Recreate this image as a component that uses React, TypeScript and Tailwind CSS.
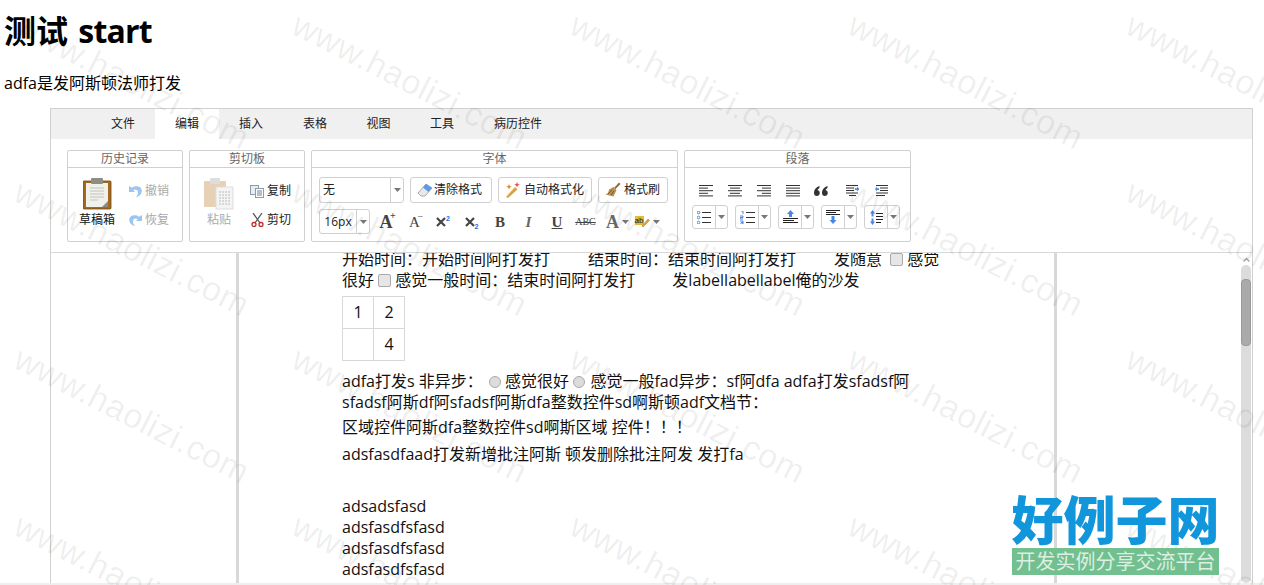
import React from "react";

const FONT = "[font-family:'Open_Sans','Noto_Sans_CJK_SC',sans-serif]";

// watermark grid, one www.haolizi.com per cell
const marks: { x: number; y: number }[] = [];
for (let row = 0; row < 4; row++) {
  for (let col = 0; col < 5; col++) {
    marks.push({ x: 25 + col * 278, y: 6 + row * 167 });
  }
}

const Caret = () => (
  <svg width="7" height="4" viewBox="0 0 7 4" className="shrink-0">
    <path d="M0 0h7L3.500 4z" fill="#777" />
  </svg>
);

const Group = ({ title, width, children }: { title: string; width: string; children: React.ReactNode }) => (
  <div className={`${width} h-[92px] border border-[#d0d0d0] rounded-[2px] flex flex-col`}>
    <div className="h-[17px] border-b border-[#d0d0d0] text-center text-[12px] leading-[16px] text-[#666]">{title}</div>
    <div className="flex-1 relative">{children}</div>
  </div>
);

const SmallBtn = ({ icon, label, muted }: { icon: React.ReactNode; label: string; muted?: boolean }) => (
  <div className={`flex items-center gap-[3px] text-[12px] leading-[16px] ${muted ? "text-[#aaa]" : "text-[#222]"}`}>
    <span className="w-[14px] h-[14px] flex items-center justify-center">{icon}</span>
    {label}
  </div>
);

const FmtBtn = ({ w, gap, icon, label }: { w: string; gap: string; icon: React.ReactNode; label: string }) => (
  <div className={`${w} ${gap} h-[26px] pl-[6px] border border-[#d0d0d0] rounded-[3px] flex items-center text-[12px] text-[#222]`}>
    {icon}
    <span>{label}</span>
  </div>
);

const SplitBtn = ({ children }: { children: React.ReactNode }) => (
  <div className="h-[24px] w-[36px] border border-[#d0d0d0] rounded-[3px] flex items-center">
    <div className="w-[23px] h-full border-r border-[#d0d0d0] flex items-center justify-center">{children}</div>
    <div className="flex-1 flex justify-center"><Caret /></div>
  </div>
);

const BLUE = "#4a86e8";

const Align = ({ rows }: { rows: [number, number][] }) => (
  <svg width="15" height="12" viewBox="0 0 15 12" className="shrink-0">
    {rows.map(([x, w], i) => (
      <rect key={i} x={x} y={i * 2.600} width={w} height="1" fill="#333" />
    ))}
  </svg>
);

const IconQuote = () => (
  <svg width="15" height="10" viewBox="0 0 15 10" className="shrink-0">
    <path d="M3 10a3 3 0 0 1-3-3C0 3.500 2.500 1 5.500 0v2C4.500 2.600 3.800 3.300 3.600 4.100A3 3 0 0 1 3 10zM11 10a3 3 0 0 1-3-3c0-3.500 2.500-6 5.500-7v2c-1 .6-1.700 1.300-1.900 2.100A3 3 0 0 1 11 10z" fill="#333" />
  </svg>
);

const IconIndent = () => (
  <svg width="13" height="12" viewBox="0 0 13 12" className="shrink-0">
    <path d="M0 .5h12M0 3h8M0 5.500h8M0 8h12M3 10.500h7" stroke="#333" />
    <path d="M9 3.200h2V1.500L13.500 4 11 6.500V5H9z" fill={BLUE} />
  </svg>
);

const IconOutdent = () => (
  <svg width="13" height="12" viewBox="0 0 13 12" className="shrink-0">
    <path d="M1 .5h12M5 3h8M5 5.500h8M1 8h12M1 10.500h9" stroke="#333" />
    <path d="M4 3.200H2V1.500L0 4l2 2.500V5h2z" fill={BLUE} />
  </svg>
);

const IconBullets = () => (
  <svg width="15" height="13" viewBox="0 0 15 13">
    <path d="M5 1.500h9M5 6.500h9M5 11.500h9" stroke="#333" />
    <circle cx="1.500" cy="1.500" r="1.300" fill="none" stroke={BLUE} />
    <circle cx="1.500" cy="6.500" r="1.300" fill="none" stroke={BLUE} />
    <circle cx="1.500" cy="11.500" r="1.300" fill="none" stroke={BLUE} />
  </svg>
);

const IconNumbers = () => (
  <svg width="15" height="13" viewBox="0 0 15 13">
    <path d="M6 1.500h9M6 6.500h9M6 11.500h9" stroke="#333" />
    <path d="M1 0h2v3M0 5h3v1.500H0V8h3M0 10h3v3H0M1 11.500h2" fill="none" stroke={BLUE} />
  </svg>
);

const IconSpaceBefore = () => (
  <svg width="15" height="14" viewBox="0 0 15 14">
    <path d="M7.500 0L11 4H9v3H6V4H4z" fill={BLUE} />
    <path d="M0 8.500h15M0 10.500h11M0 12.500h15" stroke="#222" />
  </svg>
);

const IconSpaceAfter = () => (
  <svg width="15" height="14" viewBox="0 0 15 14">
    <path d="M0 .5h14M0 2.500h10M0 4.500h14" stroke="#222" />
    <path d="M7 14l-3.500-4h2V6h3v4h2z" fill={BLUE} />
  </svg>
);

const IconLineHeight = () => (
  <svg width="13" height="15" viewBox="0 0 13 15">
    <path d="M2.500 0L5 3.500H3.500v3h-2v-3H0zM2.500 15L5 11.500H3.500v-3h-2v3H0z" fill={BLUE} />
    <path d="M6 3.500h7M6 6.500h7M6 9.500h7M6 12.500h5" stroke="#222" />
  </svg>
);

const IconX = ({ sub }: { sub?: boolean }) => (
  <span className="relative w-[14px] h-[16px] flex items-center">
    <svg width="10" height="10" viewBox="0 0 10 10">
      <path d="M1 1l8 8M9 1l-8 8" stroke="#444" strokeWidth="2.200" />
    </svg>
    <span className={`absolute left-[10px] text-[7px] leading-[8px] font-bold text-[#2b6fe0] [font-family:'Liberation_Sans',sans-serif] ${sub ? "top-[9px]" : "top-[1px]"}`}>2</span>
  </span>
);

const Ribbon = () => (
  <div className="h-[114px] pl-[16px] pt-[11px] flex gap-[6px] border-b border-[#d8d8d8] bg-white">
    <Group title="历史记录" width="w-[116px]">
      <div className="absolute left-[10px] top-[10px] w-[38px] flex flex-col items-center">
        <svg width="29" height="32" viewBox="0 0 29 32">
          <rect x="0" y="3" width="28" height="28" rx="1" fill="#a5691e" />
          <rect x="0" y="3" width="28" height="28" rx="1" fill="none" stroke="#6e4a1c" strokeWidth=".8" />
          <rect x="3" y="5" width="22" height="24" fill="#f1f1ec" />
          <path d="M7 10h14M7 13h14M7 16h14M7 19h14M7 22h8" stroke="#c4c4bc" />
          <path d="M25 23v6h-6z" fill="#8a8a8a" />
          <rect x="8" y="0" width="12" height="6" rx="1" fill="#8d8d83" />
        </svg>
        <span className="text-[12px] leading-[16px] mt-[2px] text-[#111]">草稿箱</span>
      </div>
      <div className="absolute left-[60px] top-[15px] flex flex-col gap-[13px]">
        <SmallBtn
          muted
          label="撤销"
          icon={
            <svg width="13" height="13" viewBox="0 0 13 13">
              <path d="M0 1v6h6L4.300 5.200C6 4 8.600 4.500 9 7c.2 2-.5 3.500-2 5 3.500-.6 6-3.500 5.800-6.500C12.500 1.500 7 0 3 2.800z" fill="#9cc6ef" />
            </svg>
          }
        />
        <SmallBtn
          muted
          label="恢复"
          icon={
            <svg width="13" height="13" viewBox="0 0 13 13">
              <path d="M13 1v6H7l1.700-1.800C7 4 4.400 4.500 4 7c-.2 2 .5 3.500 2 5C2.500 11.400 0 8.500.2 5.500.5 1.500 6 0 10 2.800z" fill="#9cc6ef" />
            </svg>
          }
        />
      </div>
    </Group>
    <Group title="剪切板" width="w-[116px]">
      <div className="absolute left-[13px] top-[10px] w-[32px] flex flex-col items-center">
        <svg width="32" height="32" viewBox="0 0 32 32">
          <rect x="1" y="3" width="22" height="26" rx="1" fill="#e6d0b6" />
          <rect x="7" y="0" width="10" height="6" rx="1" fill="#ddd" />
          <rect x="13" y="9" width="17" height="22" fill="#f4f4f4" stroke="#ddd" />
          <path d="M16 14h11M16 17h11M16 20h11M16 23h11M16 26h11" stroke="#bbb" strokeDasharray="2 1" />
        </svg>
        <span className="text-[12px] leading-[16px] mt-[2px] text-[#aaa]">粘贴</span>
      </div>
      <div className="absolute left-[60px] top-[15px] flex flex-col gap-[13px]">
        <SmallBtn
          label="复制"
          icon={
            <svg width="14" height="13" viewBox="0 0 14 13">
              <rect x=".5" y=".5" width="8" height="9" fill="#e8edf4" stroke="#8c9cb0" />
              <rect x="5.500" y="3.500" width="8" height="9" fill="#fff" stroke="#8c9cb0" />
              <path d="M7 6h5M7 8h5M7 10h5" stroke="#6d7f96" />
            </svg>
          }
        />
        <SmallBtn
          label="剪切"
          icon={
            <svg width="13" height="14" viewBox="0 0 13 14">
              <path d="M2 0l7 10M11 0L4 10" stroke="#555" strokeWidth="1.300" />
              <circle cx="3" cy="11.500" r="2" fill="none" stroke="#c62828" strokeWidth="1.300" />
              <circle cx="10" cy="11.500" r="2" fill="none" stroke="#c62828" strokeWidth="1.300" />
            </svg>
          }
        />
      </div>
    </Group>
    <Group title="字体" width="w-[367px]">
      <div className="pt-[9px] pl-[7px] flex flex-col gap-[6px]">
        <div className="flex gap-[6px] items-center">
          <div className="w-[85px] h-[26px] border border-[#d0d0d0] rounded-[3px] flex items-center">
            <span className="flex-1 pl-[3px] text-[12px] text-[#222]">无</span>
            <div className="w-[13px] h-full border-l border-[#d0d0d0] flex items-center justify-center"><Caret /></div>
          </div>
          <FmtBtn
            w="w-[82px]"
            gap="gap-[1px]"
            label="清除格式"
            icon={
              <svg width="16" height="16" viewBox="0 0 16 16">
                <path d="M1 11L9 2l6 4-7 8H4z" fill="#e8e8e8" stroke="#aaa" />
                <path d="M6 5.500L9 2l6 4-3.500 4z" fill="#5b9be6" />
              </svg>
            }
          />
          <FmtBtn
            w="w-[94px]"
            gap="gap-[3px]"
            label="自动格式化"
            icon={
              <svg width="16" height="16" viewBox="0 0 16 16">
                <path d="M1 15l9-10 2.500 2.500L3 16z" fill="#d9a441" />
                <path d="M12 0l.8 2 2 .8-2 .8-.8 2-.8-2-2-.8 2-.8z" fill="#e74c3c" />
                <path d="M4 2l.8 2 2 .8-2 .8L4 7.600l-.8-2-2-.8 2-.8z" fill="#e67e22" />
              </svg>
            }
          />
          <FmtBtn
            w="w-[70px]"
            gap="gap-[3px]"
            label="格式刷"
            icon={
              <svg width="16" height="16" viewBox="0 0 16 16">
                <path d="M9 6l5-5.500 1.500 1.500-5 5z" fill="#8d6b3a" />
                <path d="M8.500 5l3 3-3 6.500-8-2c3-1 3-3 3.500-5z" fill="#b98f55" />
                <path d="M3 12l4-4M6 13l3-4" stroke="#7d5c2c" />
              </svg>
            }
          />
        </div>
        <div className="flex items-center">
          <div className="w-[51px] h-[25px] border border-[#d0d0d0] rounded-[3px] flex items-center">
            <span className="w-[37px] text-center text-[12px] text-[#222] border-r border-[#d0d0d0] leading-[23px]">16px</span>
            <div className="flex-1 flex justify-center"><Caret /></div>
          </div>
          <div className="ml-[9px] flex items-center gap-[14.500px] [font-family:'Liberation_Serif',serif] text-[#444]">
            <span className="relative w-[14px] text-center text-[18px] leading-[20px] font-bold">A<span className="absolute left-[11px] -top-[1px] text-[10px] leading-[10px]">+</span></span>
            <span className="relative w-[14px] text-center text-[15px] leading-[20px]">A<span className="absolute left-[10px] top-[0px] text-[10px] leading-[10px]">−</span></span>
            <IconX />
            <IconX sub />
            <span className="w-[14px] text-center text-[15px] leading-[20px] font-bold">B</span>
            <span className="w-[14px] text-center text-[15px] leading-[20px] italic font-bold text-[#666]">I</span>
            <span className="w-[14px] text-center text-[15px] leading-[20px] underline font-bold">U</span>
            <span className="w-[14px] flex justify-center text-[10px] leading-[20px] line-through">ABC</span>
            <span className="-ml-[1px] flex items-center gap-[3px] w-[21px] text-[18px] leading-[20px] font-bold text-[#666]">A<Caret /></span>
            <span className="-ml-[7px] flex items-center gap-[3px]">
              <span className="relative w-[15px] h-[12px]">
                <span className="absolute left-0 top-0 w-[9px] h-[9px] text-center text-[8px] leading-[9px] bg-[#e8b93a] text-[#222] [font-family:'Liberation_Sans',sans-serif]">ab</span>
                <svg width="15" height="12" viewBox="0 0 15 12" className="absolute left-0 top-0">
                  <path d="M7 10l6-7 1.500 1.500L8 11z" fill="#d9a441" stroke="#a87a2a" strokeWidth=".5" />
                </svg>
              </span>
              <Caret />
            </span>
          </div>
        </div>
      </div>
    </Group>
    <Group title="段落" width="w-[227px]">
      <div className="pt-[16px] pl-[7px] flex flex-col gap-[7px]">
        <div className="h-[14px] pl-[7px] flex items-center">
          <Align rows={[[0, 14], [0, 9], [0, 14], [0, 9], [0, 14]]} />
          <span className="w-[14px]" />
          <Align rows={[[0, 14], [2, 10], [0, 14], [2, 10], [0, 14]]} />
          <span className="w-[14px]" />
          <Align rows={[[0, 14], [5, 9], [0, 14], [5, 9], [0, 14]]} />
          <span className="w-[14px]" />
          <Align rows={[[0, 14], [0, 14], [0, 14], [0, 14], [0, 14]]} />
          <span className="w-[13px]" />
          <IconQuote />
          <span className="w-[17px]" />
          <IconIndent />
          <span className="w-[16px]" />
          <IconOutdent />
        </div>
        <div className="flex gap-[7px]">
          <SplitBtn><IconBullets /></SplitBtn>
          <SplitBtn><IconNumbers /></SplitBtn>
          <SplitBtn><IconSpaceBefore /></SplitBtn>
          <SplitBtn><IconSpaceAfter /></SplitBtn>
          <SplitBtn><IconLineHeight /></SplitBtn>
        </div>
      </div>
    </Group>
  </div>
);

const tabs = [
  { label: "文件", w: "w-[64px]" },
  { label: "编辑", w: "w-[64px]", active: true },
  { label: "插入", w: "w-[64px]" },
  { label: "表格", w: "w-[64px]" },
  { label: "视图", w: "w-[63px]" },
  { label: "工具", w: "w-[64px]" },
  { label: "病历控件", w: "w-[88px]" },
];

const CHECK = "appearance-none inline-block w-[13px] h-[13px] align-[-1px] bg-[#e6e6e6] border border-[#aaa] rounded-[2px]";
const RADIO = "appearance-none inline-block w-[12px] h-[12px] align-[-1px] bg-[#dcdcdc] border border-[#aaa] rounded-full";

const Doc = () => (
  <div className="pl-[103px] -mt-[4px] text-[16px] leading-[21px] text-[#111]">
    <p>开始时间：开始时间阿打发打<span className="inline-block w-[38px]" />结束时间：结束时间阿打发打<span className="inline-block w-[38px]" />发随意 <input type="checkbox" className={`${CHECK} ml-[4px]`} readOnly /> 感觉</p>
    <p>很好 <input type="checkbox" className={CHECK} readOnly /> 感觉一般时间：结束时间阿打发打<span className="inline-block w-[37px]" />发labellabellabel俺的沙发</p>
    <table className="mt-[5px] border-collapse">
      <tbody>
        <tr>
          <td className="w-[31px] h-[32px] border border-[#d8d8d8] text-center">1</td>
          <td className="w-[31px] h-[32px] border border-[#d8d8d8] text-center">2</td>
        </tr>
        <tr>
          <td className="h-[32px] border border-[#d8d8d8]" />
          <td className="h-[32px] border border-[#d8d8d8] text-center">4</td>
        </tr>
      </tbody>
    </table>
    <p className="mt-[10px]">adfa打发s 非异步： <input type="radio" className={`${RADIO} ml-[2px]`} readOnly /> 感觉很好 <input type="radio" className={`${RADIO} mr-[1px]`} readOnly /> 感觉一般fad异步：sf阿dfa adfa打发sfadsf阿</p>
    <p>sfadsf阿斯df阿sfadsf阿斯dfa整数控件sd啊斯顿adf文档节：</p>
    <p className="mt-[4px]">区域控件阿斯dfa整数控件sd啊斯区域 控件！！！</p>
    <p className="mt-[6px]">adsfasdfaad打发新增批注阿斯 顿发删除批注阿发 发打fa</p>
    <p className="mt-[31px]">adsadsfasd</p>
    <p>adsfasdfsfasd</p>
    <p>adsfasdfsfasd</p>
    <p>adsfasdfsfasd</p>
    <p>adsfasdfsfasd</p>
  </div>
);

export default function App() {
  return (
    <div className={`relative h-[585px] w-[1264px] overflow-hidden bg-white text-black ${FONT}`}>
      <h1 className="pl-[4px] pt-[9px] text-[32px] leading-[43px] font-bold">测试 <span className="ml-[2px] tracking-[-0.8px]">start</span></h1>
      <p className="pl-[4px] mt-[21px] text-[16px] leading-[21px]">adfa是发阿斯顿法师打发</p>
      <div className="ml-[50px] mt-[14px] w-[1203px] h-[475px] border border-b-0 border-[#d0d0d0] flex flex-col">
        <div className="h-[30px] pl-[40px] bg-[#f0f0f0] flex text-[12px] text-[#222]">
          {tabs.map((t) => (
            <div key={t.label} className={`${t.w} flex items-center justify-center ${t.active ? "bg-white" : ""}`}>{t.label}</div>
          ))}
        </div>
        <Ribbon />
        <div className="flex flex-1 min-h-0">
          <div className="ml-[185px] w-[821px] border-x-[3px] border-[#d8d8d8] overflow-hidden">
            <Doc />
          </div>
          <div className="ml-auto mr-[1px] w-[10px] flex flex-col">
            <div className="h-[12px] flex items-center justify-center">
              <svg width="7" height="5" viewBox="0 0 7 5"><path d="M.5 4.500l3-3 3 3" fill="none" stroke="#aaa" strokeWidth="1.500" /></svg>
            </div>
            <div className="flex-1 rounded-[5px] bg-[#dcdcdc] pt-[14px]">
              <div className="h-[67px] bg-[#aaaaaa] border border-[#999] rounded-[4px]" />
            </div>
          </div>
        </div>
      </div>
      <div className="h-[2px] bg-[#eeeeee]" />

      {/* watermark */}
      <div className="absolute inset-0 pointer-events-none overflow-hidden">
        {marks.map((m, i) => (
          <span
            key={i}
            className="absolute origin-top-left rotate-[27deg] whitespace-nowrap text-[34px] leading-[36px] tracking-[0.5px] text-[#000]/[0.07] [font-family:'Liberation_Sans',sans-serif]"
            style={{ left: m.x, top: m.y }}
          >
            www.haolizi.com
          </span>
        ))}
      </div>

      {/* site logo */}
      <div className="absolute left-[1012px] top-[492px] w-[207px] flex flex-col items-center">
        <div className="text-[52px] leading-[55px] font-black text-[#1296db] whitespace-nowrap">好例子网</div>
        <div className="mt-[1px] w-full h-[27px] bg-[#72c08f] text-center text-[20px] leading-[27px] text-white/75 whitespace-nowrap">开发实例分享交流平台</div>
      </div>
    </div>
  );
}
